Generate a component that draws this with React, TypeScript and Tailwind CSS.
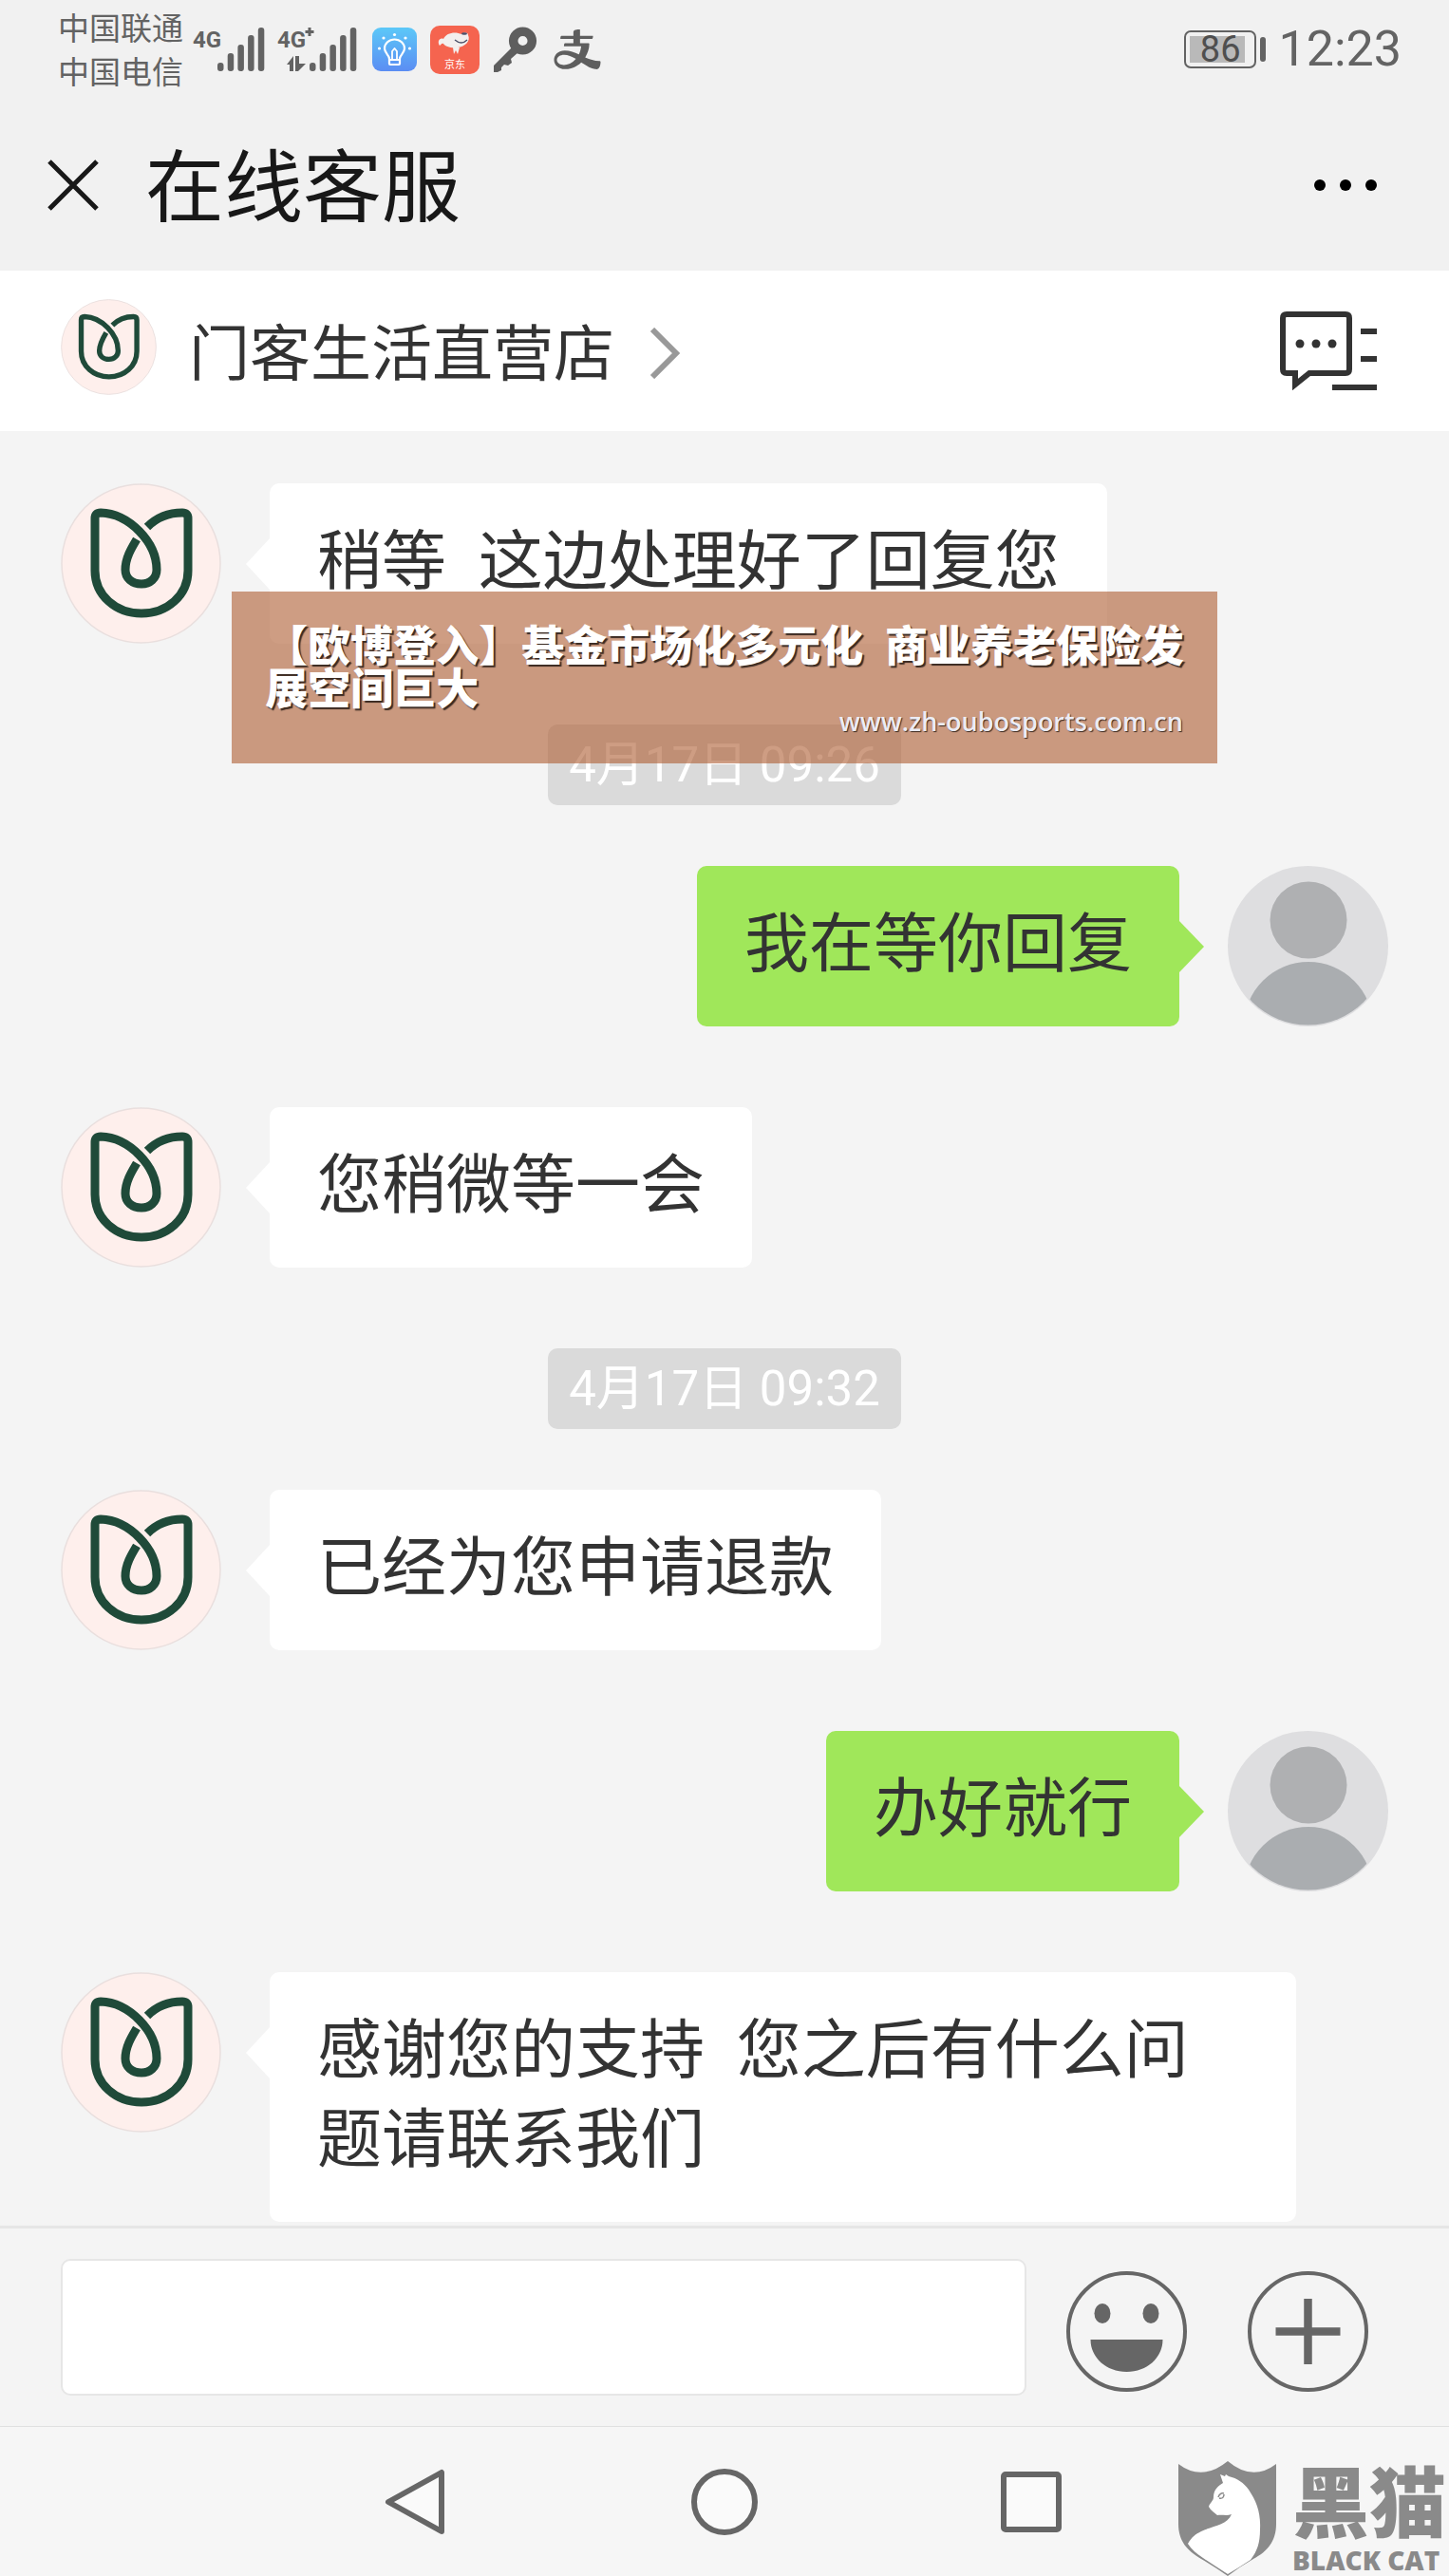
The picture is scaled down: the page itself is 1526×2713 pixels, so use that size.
import { AiOutlineAlipay } from 'react-icons/ai';

type Message =
    | { kind: 'time'; text: string }
    | { kind: 'shop' | 'user'; text: string };

const messages: Message[] = [
    { kind: 'shop', text: '稍等  这边处理好了回复您' },
    { kind: 'time', text: '4月17日 09:26' },
    { kind: 'user', text: '我在等你回复' },
    { kind: 'shop', text: '您稍微等一会' },
    { kind: 'time', text: '4月17日 09:32' },
    { kind: 'shop', text: '已经为您申请退款' },
    { kind: 'user', text: '办好就行' },
    { kind: 'shop', text: '感谢您的支持  您之后有什么问题请联系我们' },
];

const barTops = [38, 28, 19, 9, 1];

const SignalBars = ({ x }: { x: number }) => (
    <g fill="#636363">
        {barTops.map((top, i) => (
            <rect key={top} x={x + i * 10.7} y={top} width="6.5" height={47 - top} rx="3" />
        ))}
    </g>
);

const networkText = 'font-[Roboto,sans-serif] text-[24px] font-bold';

const BulbIcon = () => (
    <svg viewBox="0 0 47 46" className="h-[46px] w-[47px]">
        <defs>
            <linearGradient id="bulb" x1="0" y1="0" x2="0" y2="1">
                <stop offset="0" stopColor="#5cc8f8" />
                <stop offset="1" stopColor="#5b8df3" />
            </linearGradient>
        </defs>
        <rect width="47" height="46" rx="9" fill="url(#bulb)" />
        <g fill="none" stroke="#fff" strokeWidth="2.2" strokeLinejoin="round">
            <path d="M18 33 C18 29 13 27 13 22 A10.5 9.5 0 0 1 34 22 C34 27 29 29 29 33 V38 Q29 39 28 39 H19 Q18 39 18 38 Z" />
            <path d="M18 34 H29 M21 33 V25 L23.5 22 L26 25 V33" strokeWidth="1.8" />
        </g>
        <g fill="#fff">
            <circle cx="23.5" cy="7.5" r="1.6" />
            <circle cx="12" cy="11" r="1.6" />
            <circle cx="35" cy="11" r="1.6" />
            <circle cx="7.5" cy="22" r="1.6" />
            <circle cx="39.5" cy="22" r="1.6" />
        </g>
    </svg>
);

const JdIcon = () => (
    <svg viewBox="0 0 52 51" className="h-[51px] w-[52px]">
        <rect width="52" height="51" rx="10" fill="#f5644f" />
        <path
            d="M10 21 C7 17 10 12 14 14 C17 7 27 6 33 9 C36 7 40 7 40 10 C43 16 37 22 29 23 C22 24 16 22 14 19 C12 18 12 20 10 21 Z"
            fill="#f3efee"
        />
        <path d="M24 23 L31 23 L29 30 L27 26 L25 30 Z" fill="#f3efee" />
        <path d="M26 15 Q33 21 39 15" fill="none" stroke="#4b4f68" strokeWidth="1.3" />
        <ellipse cx="36" cy="8.5" rx="3" ry="1.2" fill="#4b4f68" />
        <text x="26" y="45" textAnchor="middle" fill="#fff" className="text-[11px]">
            京东
        </text>
    </svg>
);

const KeyIcon = () => (
    <svg viewBox="0 0 46 48" className="h-[48px] w-[46px]">
        <circle cx="30.5" cy="15" r="9.8" fill="none" stroke="#5e5e5e" strokeWidth="9.5" />
        <path d="M20 21 L26 27 L18 34 L19 38 L15 41 L11 40 L8 43 L8 46 L4 48 H0 V41 Z" fill="#5e5e5e" />
    </svg>
);

const StatusBar = () => (
    <div className="flex h-[104px] items-center pl-[61px] pr-[50px] text-[#636363]">
        <div className="pt-1 text-[33px] leading-[46px]">
            <p>中国联通</p>
            <p>中国电信</p>
        </div>
        <svg viewBox="0 0 76 48" className="ml-[10px] h-12 w-[76px]">
            <text x="0" y="22" fill="#636363" className={networkText}>
                4G
            </text>
            <SignalBars x={26} />
        </svg>
        <svg viewBox="0 0 84 48" className="ml-[13px] h-12 w-[84px]">
            <text x="0" y="22" fill="#636363" className={networkText}>
                4G
            </text>
            <path d="M34 1 V10 M29.5 5.5 H38.5" stroke="#636363" strokeWidth="3" />
            <path d="M10 40 L17 31 V47 H13 V40 Z M19 31 H23 V39 H30 L22 47 H19 Z" fill="#636363" />
            <SignalBars x={34} />
        </svg>
        <div className="ml-4 flex items-center">
            <BulbIcon />
            <div className="ml-[14px]">
                <JdIcon />
            </div>
            <div className="ml-[15px]">
                <KeyIcon />
            </div>
            <AiOutlineAlipay className="ml-[14px] size-14 text-[#5e5e5e]" />
        </div>
        <div className="ml-auto flex items-center">
            <div className="flex h-10 w-[76px] items-center rounded-[7px] border-2 border-[#636363] p-1">
                <span className="flex h-full w-[58px] items-center justify-end bg-[#b9b9b9] pr-1 text-[38px] leading-none text-[#4f4f4f]">
                    86
                </span>
            </div>
            <span className="ml-1 h-[26px] w-[6px] rounded-full bg-[#636363]" />
            <time className="ml-[14px] text-[52px] leading-none">12:23</time>
        </div>
    </div>
);

const ShopLogo = ({ className }: { className: string }) => (
    <svg viewBox="0 0 169 169" className={`shrink-0 ${className}`}>
        <circle cx="84.5" cy="84.5" r="83.5" fill="#feefec" stroke="#e9dfde" strokeWidth="1.5" />
        <path
            d="M91 46 C101 36 114 31 128 31 Q134 31 134 37 V92 C134 118 112 137 85 137 C58 137 36 118 36 92 V37 Q36 31 42 31 C72 32 101 62 101 91 C101 100 94 106 85 106 C75 106 68 100 68 91 C68 79 74 69 80 59"
            fill="none"
            stroke="#1f4a39"
            strokeWidth="9"
        />
    </svg>
);

const UserAvatar = () => (
    <svg viewBox="0 0 169 169" className="size-[169px] shrink-0">
        <defs>
            <clipPath id="user-clip">
                <circle cx="84.5" cy="84.5" r="83" />
            </clipPath>
        </defs>
        <circle cx="84.5" cy="84.5" r="84.5" fill="#dedee0" />
        <circle cx="85" cy="57" r="40.5" fill="#afb0b2" />
        <circle cx="85" cy="169" r="68" fill="#aaadb0" clipPath="url(#user-clip)" />
    </svg>
);

const TitleBar = () => (
    <div className="flex h-[181px] items-center pl-[50px] pr-[72px]">
        <button aria-label="关闭">
            <svg viewBox="0 0 54 54" className="size-[54px]" stroke="#181818" strokeWidth="5">
                <path d="M2 2 L52 52 M52 2 L2 52" />
            </svg>
        </button>
        <h1 className="ml-[49px] pt-2 text-[83px] leading-none text-[#181818]">在线客服</h1>
        <button aria-label="更多" className="ml-auto flex gap-[15px] p-1">
            <span className="size-3 rounded-full bg-black" />
            <span className="size-3 rounded-full bg-black" />
            <span className="size-3 rounded-full bg-black" />
        </button>
    </div>
);

const ShopBar = () => (
    <div className="flex h-[169px] items-center bg-white pl-[64px] pr-[76px]">
        <a href="#shop" className="flex items-center">
            <ShopLogo className="mb-2 size-[101px]" />
            <span className="ml-[34px] pt-2 text-[64px] leading-none text-[#333]">门客生活直营店</span>
            <svg viewBox="0 0 32 54" className="ml-[37px] mt-1 h-[54px] w-8" fill="none" stroke="#999" strokeWidth="6">
                <path d="M3 2 L28 27 L3 52" />
            </svg>
        </a>
        <button aria-label="会话列表" className="ml-auto">
            <svg viewBox="0 0 102 83" className="h-[83px] w-[102px]" fill="none" stroke="#333" strokeWidth="6">
                <path d="M7 3 H69 Q73 3 73 7 V61 Q73 65 69 65 H31 L16 77 V65 H7 Q3 65 3 61 V7 Q3 3 7 3 Z" />
                <path d="M85 21 H102 M85 50 H102 M55 80 H102" />
                <g fill="#333" stroke="none">
                    <circle cx="21" cy="34" r="4.5" />
                    <circle cx="38" cy="34" r="4.5" />
                    <circle cx="55" cy="34" r="4.5" />
                </g>
            </svg>
        </button>
    </div>
);

const ChatRow = ({ message }: { message: Message }) => {
    if (message.kind === 'time') {
        return (
            <time className="mb-[64px] flex h-[85px] items-center self-center rounded-[10px] bg-[#dadada] px-[22px] text-[51px] leading-none text-white">
                {message.text}
            </time>
        );
    }

    if (message.kind === 'user') {
        return (
            <div className="mb-[85px] flex items-start justify-end">
                <p className="whitespace-pre-wrap rounded-[10px] bg-[#a0e75a] px-[50px] pb-[39px] pt-[36px] text-[68px] leading-[94px] text-[#333]">
                    {message.text}
                </p>
                <svg viewBox="0 0 26 54" className="mr-[25px] mt-[58px] h-[54px] w-[26px]">
                    <path d="M0 0 L26 27 L0 54 Z" fill="#a0e75a" />
                </svg>
                <UserAvatar />
            </div>
        );
    }

    return (
        <div className="mb-[85px] flex items-start pr-[97px] last:mb-0">
            <ShopLogo className="size-[169px]" />
            <svg viewBox="0 0 25 54" className="ml-[26px] mt-[58px] h-[54px] w-[25px] shrink-0">
                <path d="M25 0 L0 27 L25 54 Z" fill="#fff" />
            </svg>
            <p className="whitespace-pre-wrap rounded-[10px] bg-white px-[50px] pb-[39px] pt-[36px] text-[68px] leading-[94px] text-[#333]">
                {message.text}
            </p>
        </div>
    );
};

const Banner = () => (
    <div className="absolute inset-x-[16%] top-[169px] z-10 h-[181px] bg-[#b1643a]/63 pl-[35px] pr-[28px] pt-[36px]">
        <p className="text-[45px] font-black leading-[45px] text-white [text-shadow:2px_2px_1px_#3a2a22]">
            【欧博登入】基金市场化多元化&ensp;商业养老保险发展空间巨大
        </p>
        <p className="pr-2 text-right font-['Open_Sans',sans-serif] text-[27px] font-semibold leading-[22px] text-[#ececf4] [text-shadow:1px_1px_1px_#3a2a22]">
            www.zh-oubosports.com.cn
        </p>
    </div>
);

const Composer = () => (
    <div className="flex h-[211px] items-center border-t-[3px] border-[#e6e6e6] bg-[#f4f4f4] pl-[64px] pr-[85px]">
        <input
            type="text"
            aria-label="输入消息"
            className="h-[144px] min-w-0 flex-1 rounded-[10px] border-2 border-[#e6e6e6] bg-white px-8 text-[60px] text-[#333] outline-none"
        />
        <button aria-label="表情" className="ml-[42px] mt-[9px]">
            <svg viewBox="0 0 127 127" className="size-[127px]">
                <circle cx="63.5" cy="63.5" r="61.5" fill="none" stroke="#666" strokeWidth="4" />
                <ellipse cx="38" cy="44.5" rx="8.5" ry="10.5" fill="#666" />
                <ellipse cx="89" cy="44.5" rx="8.5" ry="10.5" fill="#666" />
                <path d="M25.5 72 H101.5 C101.5 91 85 106 63.5 106 C42 106 25.5 91 25.5 72 Z" fill="#666" />
            </svg>
        </button>
        <button aria-label="更多功能" className="ml-[64px] mt-[9px]">
            <svg viewBox="0 0 127 127" className="size-[127px]" fill="none" stroke="#666">
                <circle cx="63.5" cy="63.5" r="61.5" strokeWidth="4" />
                <path d="M63.5 29 V98 M29.5 63.5 H97.5" strokeWidth="8.5" />
            </svg>
        </button>
    </div>
);

const BlackCatMark = () => (
    <div className="absolute right-0 top-[36px] flex items-start pr-[3px] text-[#8a8a8a]">
        <svg viewBox="0 0 103 121" className="h-[121px] w-[103px]">
            <path
                d="M0 3 Q25 22 52 0 Q78 22 103 3 V66 C103 84 94 95 79 103 Q65 111 52 121 Q38 111 24 103 C9 94 0 84 0 66 Z"
                fill="#8a8a8a"
            />
            <path
                d="M44 14 L49 16 L50 14 L53 16 C62 18 69 23 74 30 C82 42 87 54 86 72 C86 86 83 95 76 104 Q64 112 52 119 Q38 110 26 102 Q15 95 10 87 C14 80 18 77 24 74 C36 68 51 68 56 56 C51 58 46 56 41 57 C38 54 34 52 32 48 C33 44 37 42 37 38 C37 30 42 26 47 23 Z"
                fill="#fff"
            />
            <path d="M42 38 Q44 33 48 34 M43 39 Q48 40 48 35" fill="none" stroke="#8a8a8a" strokeWidth="1.5" />
        </svg>
        <div className="ml-[17px] flex flex-col">
            <span className="text-[81px] font-black leading-[94px]">黑猫</span>
            <span className="whitespace-nowrap font-['Open_Sans',sans-serif] text-[28px] font-extrabold leading-[20px]">
                BLACK CAT
            </span>
        </div>
    </div>
);

const NavBar = () => (
    <nav className="relative flex h-[158px] items-center justify-center gap-[255px] border-t border-[#e0e0e0] bg-[#f6f6f6]">
        <button aria-label="返回">
            <svg viewBox="0 0 70 70" className="size-[70px]" fill="#fafafa" stroke="#666" strokeWidth="6" strokeLinejoin="round">
                <path d="M62 4 V66 L6 35 Z" />
            </svg>
        </button>
        <button aria-label="主页">
            <svg viewBox="0 0 70 70" className="size-[70px]" fill="#fafafa" stroke="#666" strokeWidth="6">
                <circle cx="35" cy="35" r="32" />
            </svg>
        </button>
        <button aria-label="最近任务">
            <svg viewBox="0 0 70 70" className="size-[70px]" fill="#fafafa" stroke="#666" strokeWidth="6">
                <rect x="4" y="6" width="58" height="58" rx="2" />
            </svg>
        </button>
        <BlackCatMark />
    </nav>
);

const App = () => (
    <div className="flex min-h-screen flex-col bg-[#f4f4f4] font-[Roboto,'Noto_Sans_CJK_SC',sans-serif]">
        <header>
            <div className="bg-[#f1f1f1]">
                <StatusBar />
                <TitleBar />
            </div>
            <ShopBar />
        </header>
        <main className="relative flex flex-1 flex-col px-[64px] pb-1 pt-[55px]">
            <Banner />
            {messages.map((message) => (
                <ChatRow key={message.text} message={message} />
            ))}
        </main>
        <footer>
            <Composer />
            <NavBar />
        </footer>
    </div>
);

export default App;
